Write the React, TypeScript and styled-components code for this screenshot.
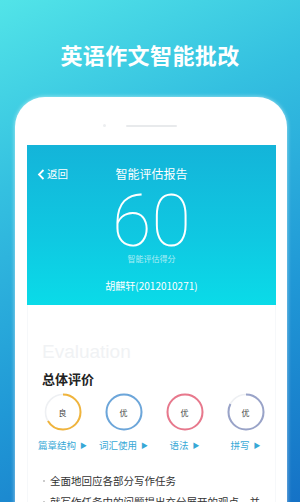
import React from "react";
import styled, { createGlobalStyle } from "styled-components";

const Global = createGlobalStyle`
  html, body { margin: 0; padding: 0; }
  body { font-family: "Noto Sans CJK SC", "Noto Sans", sans-serif; }
`;

const Page = styled.div`
  width: 300px;
  height: 502px;
  overflow: hidden;
  display: flex;
  flex-direction: column;
  background: linear-gradient(155deg, #52e4e8 0%, #34c0e0 30%, #2098d6 65%, #1572c6 100%);
`;

const Title = styled.h1`
  margin: 41px 0 0;
  height: 26px;
  line-height: 26px;
  text-align: center;
  color: #fff;
  font-size: 22px;
  font-weight: 700;
  letter-spacing: 0.4px;
`;

const Phone = styled.div`
  margin: 30px 0 0 15px;
  width: 272px;
  flex: 1;
  background: #fff;
  border-radius: 30px 30px 0 0;
  padding: 0 11px 0 12px;
  box-sizing: border-box;
  display: flex;
  flex-direction: column;
  box-shadow: 0 0 4px rgba(255, 255, 255, 0.6);
`;

const TopBar = styled.div`
  height: 48px;
  display: flex;
  align-items: flex-end;
  justify-content: center;
  padding: 0 23px 18px 0;
  box-sizing: border-box;
  gap: 20px;
`;

const Dot = styled.div`
  width: 3px;
  height: 3px;
  border-radius: 50%;
  background: #eceef0;
`;

const Speaker = styled.div`
  width: 51px;
  height: 2px;
  border-radius: 1px;
  background: #e8eaec;
`;

const Screen = styled.div`
  height: 160px;
  background: linear-gradient(180deg, #14b4d9 0%, #0fc9e2 60%, #0adbe8 100%);
  display: flex;
  flex-direction: column;
  align-items: center;
  color: #fff;
  box-sizing: border-box;
  padding-top: 19px;
`;

const Nav = styled.div`
  width: 100%;
  height: 20px;
  position: relative;
  display: flex;
  align-items: center;
  justify-content: center;
  font-size: 12px;
  line-height: 20px;
`;

const Back = styled.div`
  position: absolute;
  left: 10px;
  top: 0;
  height: 20px;
  display: flex;
  align-items: center;
  gap: 2px;
  font-size: 10.5px;
`;

const Score = styled.div`
  font-family: Roboto, "Liberation Sans", sans-serif;
  font-weight: 100;
  font-size: 72px;
  line-height: 60px;
  height: 60px;
  margin-top: 8px;
`;

const ScoreLabel = styled.div`
  font-size: 8px;
  line-height: 12px;
  margin-top: 1px;
  color: rgba(255, 255, 255, 0.65);
`;

const Name = styled.div`
  font-size: 10px;
  line-height: 14px;
  margin-top: 14px;
`;

const Content = styled.div`
  flex: 1;
  display: flex;
  flex-direction: column;
  padding: 0 0 0 14px;
  border-left: 1px solid #f6f8fa;
  border-right: 1px solid #f6f8fa;
`;

const Evaluation = styled.div`
  font-family: "Liberation Sans", Arial, sans-serif;
  font-size: 19px;
  line-height: 24px;
  color: #f0f2f4;
  margin-top: 35px;
`;

const Section = styled.div`
  font-size: 13px;
  font-weight: 700;
  color: #222;
  line-height: 18px;
  margin-top: 6px;
`;

const Grades = styled.div`
  display: grid;
  grid-template-columns: repeat(4, 61px);
  margin-left: -10px;
  margin-top: 5px;
`;

const Grade = styled.div`
  display: flex;
  flex-direction: column;
  align-items: center;
`;

const Ring = styled.div`
  position: relative;
  width: 38px;
  height: 38px;
  display: flex;
  align-items: center;
  justify-content: center;
`;

const RingText = styled.span`
  position: absolute;
  font-size: 8px;
  color: #444;
`;

const GradeLink = styled.div`
  margin-top: 8px;
  font-size: 9.5px;
  line-height: 12px;
  color: #36a8d6;
  display: flex;
  align-items: center;
  gap: 4px;
`;

const Tri = styled.span`
  font-size: 7px;
`;

const Bullets = styled.ul`
  list-style: none;
  margin: 23px 0 0;
  padding: 0;
  display: flex;
  flex-direction: column;
  gap: 7px;
`;

const Bullet = styled.li`
  display: flex;
  align-items: center;
  gap: 5px;
  font-size: 10.5px;
  line-height: 14px;
  color: #333;
  white-space: nowrap;
  &::before {
    content: "";
    width: 2px;
    height: 2px;
    border-radius: 50%;
    background: #bbb;
    margin-left: 1px;
  }
`;

type G = { label: string; grade: string; color: string; pct: number };

const grades: G[] = [
  { label: "篇章结构", grade: "良", color: "#f0b43c", pct: 0.66 },
  { label: "词汇使用", grade: "优", color: "#6ca6da", pct: 1 },
  { label: "语法", grade: "优", color: "#e8788c", pct: 1 },
  { label: "拼写", grade: "优", color: "#99a3c8", pct: 0.82 },
];

function RingSvg({ color, pct }: { color: string; pct: number }) {
  const r = 17.5;
  const c = 2 * Math.PI * r;
  return (
    <svg width="38" height="38" viewBox="0 0 38 38">
      <circle cx="19" cy="19" r={r} fill="none" stroke="#eef0f3" strokeWidth="1.6" />
      <circle
        cx="19"
        cy="19"
        r={r}
        fill="none"
        stroke={color}
        strokeWidth="2"
        strokeDasharray={`${c * pct} ${c}`}
        transform="rotate(-90 19 19)"
      />
    </svg>
  );
}

export default function App() {
  return (
    <>
      <Global />
      <Page>
        <Title>英语作文智能批改</Title>
        <Phone>
          <TopBar>
            <Dot />
            <Speaker />
          </TopBar>
          <Screen>
            <Nav>
              <Back>
                <svg width="8" height="11" viewBox="0 0 8 11">
                  <path d="M6.5 1 L2 5.5 L6.5 10" fill="none" stroke="#fff" strokeWidth="1.8" />
                </svg>
                返回
              </Back>
              智能评估报告
            </Nav>
            <Score>60</Score>
            <ScoreLabel>智能评估得分</ScoreLabel>
            <Name>胡麒轩(2012010271)</Name>
          </Screen>
          <Content>
            <Evaluation>Evaluation</Evaluation>
            <Section>总体评价</Section>
            <Grades>
              {grades.map((g) => (
                <Grade key={g.label}>
                  <Ring>
                    <RingSvg color={g.color} pct={g.pct} />
                    <RingText>{g.grade}</RingText>
                  </Ring>
                  <GradeLink>
                    {g.label}
                    <Tri>▶</Tri>
                  </GradeLink>
                </Grade>
              ))}
            </Grades>
            <Bullets>
              <Bullet>全面地回应各部分写作任务</Bullet>
              <Bullet>就写作任务中的问题提出充分展开的观点，并</Bullet>
            </Bullets>
          </Content>
        </Phone>
      </Page>
    </>
  );
}
